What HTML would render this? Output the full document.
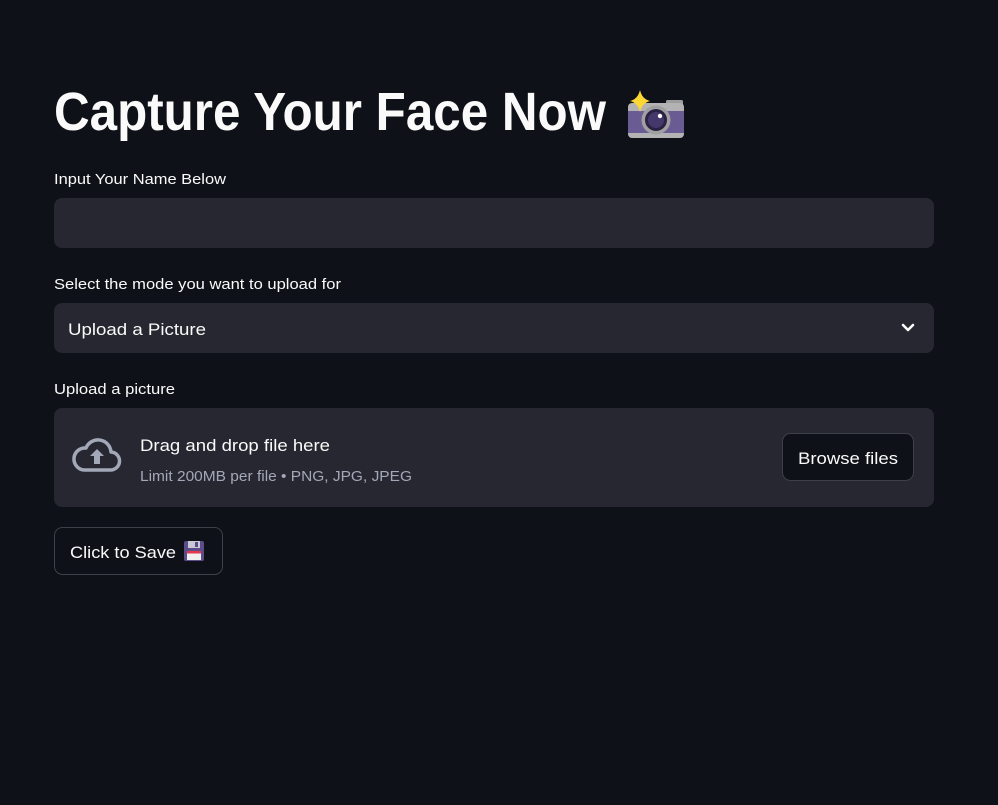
<!DOCTYPE html>
<html><head><meta charset="utf-8"><style>
html,body{margin:0;padding:0;background:#0e1117;width:998px;height:805px;overflow:hidden}
svg{position:absolute;left:0;top:0}
</style></head><body>
<svg width="998" height="805" viewBox="0 0 998 805" xmlns="http://www.w3.org/2000/svg" font-family="Liberation Sans, sans-serif">
<rect width="998" height="805" fill="#0e1117"/>
<text x="54" y="130" font-size="54" font-weight="bold" fill="#fafafa" textLength="552" lengthAdjust="spacingAndGlyphs">Capture Your Face Now</text>
<!-- camera -->
<rect x="666" y="100" width="17" height="6" rx="1.5" fill="#9e9e9e"/>
<rect x="628" y="103" width="56" height="35" rx="4" fill="#b3b3b3"/>
<rect x="628" y="111" width="56" height="22" fill="#6b5b95"/>
<circle cx="656" cy="120" r="14.5" fill="#a0a0a0"/>
<circle cx="656" cy="120" r="11" fill="#2a2244"/>
<circle cx="656" cy="120" r="8" fill="#44386a"/>
<circle cx="660" cy="116" r="2.2" fill="#fff"/>
<path d="M640 90 Q642 99 650 101 Q642 103 640 112 Q638 103 630 101 Q638 99 640 90Z" fill="#fdd835"/>
<text x="54" y="184" font-size="15" fill="#fafafa" textLength="172" lengthAdjust="spacingAndGlyphs">Input Your Name Below</text>
<rect x="54" y="198" width="880" height="50" rx="8" fill="#262730"/>
<text x="54" y="289" font-size="15" fill="#fafafa" textLength="287" lengthAdjust="spacingAndGlyphs">Select the mode you want to upload for</text>
<rect x="54" y="303" width="880" height="50" rx="8" fill="#262730"/>
<text x="68" y="335" font-size="17" fill="#fafafa" textLength="138" lengthAdjust="spacingAndGlyphs">Upload a Picture</text>
<path d="M903 325 L908 330 L913 325" stroke="#fafafa" stroke-width="2.6" fill="none" stroke-linecap="round" stroke-linejoin="round"/>
<text x="54" y="394" font-size="15" fill="#fafafa" textLength="121" lengthAdjust="spacingAndGlyphs">Upload a picture</text>
<rect x="54" y="408" width="880" height="99" rx="8" fill="#262730"/>
<!-- cloud -->
<path d="M84 470 H110 A9 9 0 0 0 111 452 A13 13 0 0 0 86 448 A11 11 0 0 0 84 470 Z" fill="none" stroke="#a3a8b8" stroke-width="3.5" stroke-linejoin="round"/>
<path d="M97 449 L104 456 H100 V464 H94 V456 H90 Z" fill="#a3a8b8"/>
<text x="140" y="451" font-size="17" fill="#fafafa" textLength="190" lengthAdjust="spacingAndGlyphs">Drag and drop file here</text>
<text x="140" y="481" font-size="14.5" fill="#a3a8b8" textLength="272" lengthAdjust="spacingAndGlyphs">Limit 200MB per file • PNG, JPG, JPEG</text>
<rect x="782.5" y="433.5" width="131" height="47" rx="8" fill="#0e1117" stroke="#3d4049"/>
<text x="798" y="464" font-size="17" fill="#fafafa" textLength="100" lengthAdjust="spacingAndGlyphs">Browse files</text>
<rect x="54.5" y="527.5" width="168" height="47" rx="8" fill="#0e1117" stroke="#3d4049"/>
<text x="70" y="558" font-size="17" fill="#fafafa" textLength="106" lengthAdjust="spacingAndGlyphs">Click to Save</text>
<!-- floppy -->
<g transform="translate(184,541)">
<rect x="0" y="0" width="20" height="20" rx="2" fill="#5c4d8a"/>
<rect x="4" y="0" width="12" height="7" fill="#c9c9d6"/>
<rect x="11" y="1" width="3" height="5" fill="#5c4d8a"/>
<rect x="3" y="10" width="14" height="9" fill="#f0f0f0"/>
<rect x="3" y="10" width="14" height="2.5" fill="#e53950"/>
</g>
</svg>
</body></html>
